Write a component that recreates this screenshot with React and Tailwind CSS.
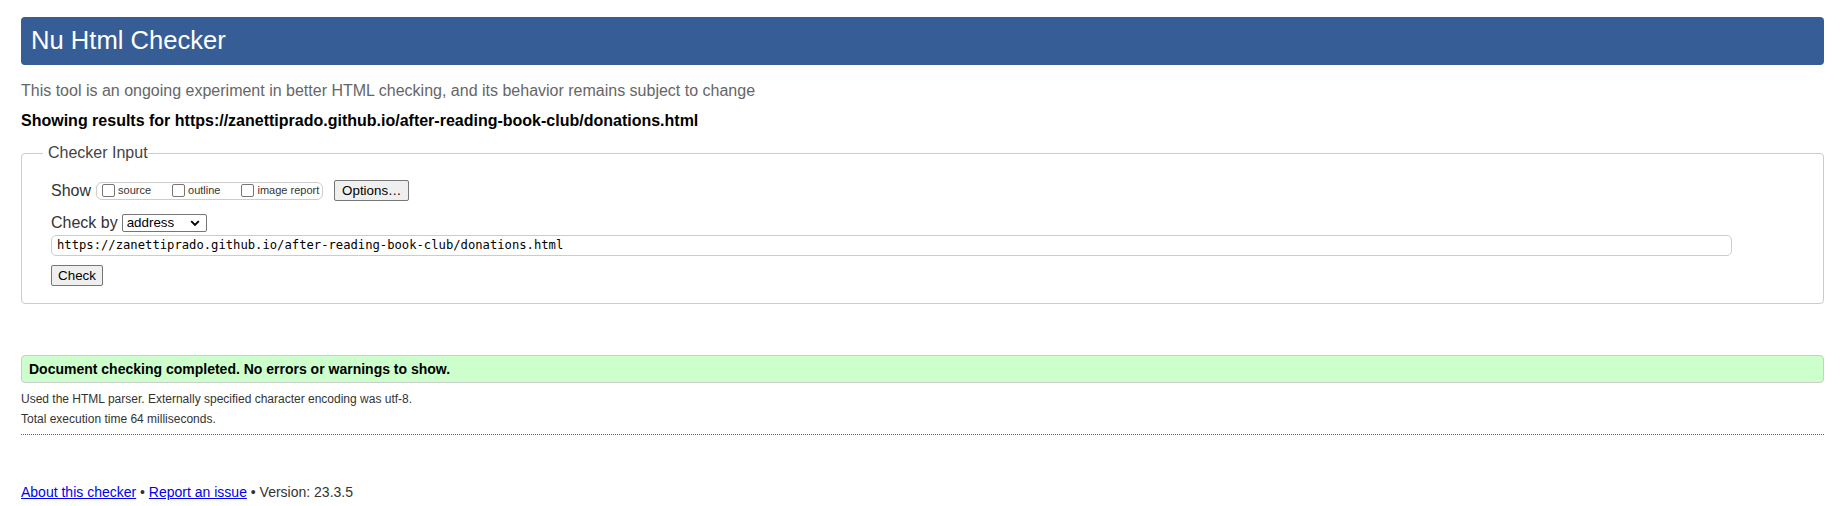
import React from 'react';

const checks = [
  { id: 'source', label: 'source', gap: 'mr-[17px]' },
  { id: 'outline', label: 'outline', gap: 'mr-[17px]' },
  { id: 'image', label: 'image report', gap: 'mr-[3px]' },
];

const btn =
  'flex items-center justify-center h-[21px] px-[6px] bg-[#efefef] border border-[#767676] rounded-[2px] text-[13.333px] text-black leading-none';

export default function App() {
  return (
    <div className="bg-white min-h-[506px] pt-[17px] font-['Liberation_Sans',Arial,sans-serif] text-[#222]">
      <div className="ml-[21px] w-[1803px]">
        {/* Title bar */}
        <div className="h-[48px] flex items-center pl-[10px] bg-[#365d95] rounded-[4px]">
          <h1 className="text-[25.6px] leading-none text-white">Nu Html Checker</h1>
        </div>

        <p className="mt-[17px] text-[16px] leading-[18px] text-[#666]">
          This tool is an ongoing experiment in better HTML checking, and its behavior remains subject to change
        </p>
        <p className="mt-[12px] text-[16px] leading-[18px] font-bold text-black">
          Showing results for https://zanettiprado.github.io/after-reading-book-club/donations.html
        </p>

        {/* Input form */}
        <fieldset className="mt-[14px] border border-[#cccccc] rounded-[4px] pl-[29px] pb-[17px]">
          <legend className="-ml-[8px] pl-[5px] text-[16px] leading-[18px] text-[#444]">Checker Input</legend>

          <div className="mt-[18px] h-[21px] flex items-center">
            <span className="text-[16px] leading-[18px] text-[#333]">Show</span>
            <div className="ml-[5px] h-[18px] flex items-center border border-[#cccccc] rounded-[6px] pl-[1px]">
              {checks.map(({ id, label, gap }) => (
                <label key={id} className={`flex items-center ${gap}`}>
                  <input
                    type="checkbox"
                    className="appearance-none ml-[4px] mr-[3px] w-[13px] h-[13px] bg-white border border-[#767676] rounded-[2px]"
                  />
                  <span className="text-[11px] leading-[13px] text-[#333]">{label}</span>
                </label>
              ))}
            </div>
            <button className={`${btn} ml-[11px] w-[75px]`}>Options…</button>
          </div>

          <div className="mt-[13px] h-[18px] flex items-center">
            <span className="text-[16px] leading-[18px] text-[#333]">Check by</span>
            <div className="ml-[4px] w-[85px] h-[18px] flex items-center justify-between pl-[4px] pr-[6px] border border-[#767676] rounded-[2px] bg-white">
              <span className="text-[13.333px] leading-none text-black">address</span>
              <svg width="10" height="7" viewBox="0 0 10 7" className="mt-[1px]">
                <path d="M1.2 1.2 L5 5 L8.8 1.2" fill="none" stroke="#000" strokeWidth="1.9" />
              </svg>
            </div>
          </div>

          <div className="mt-[3px] w-[1681px] h-[21px] flex items-center pl-[5px] border border-[#cccccc] rounded-[5px] bg-white">
            <span className="font-['DejaVu_Sans_Mono','Liberation_Mono',monospace] text-[12.2px] leading-none text-black">
              https://zanettiprado.github.io/after-reading-book-club/donations.html
            </span>
          </div>

          <button className={`${btn} mt-[9px] w-[52px]`}>Check</button>
        </fieldset>

        {/* Result */}
        <div className="mt-[51px] h-[28px] flex items-center pl-[7px] bg-[#ccffcc] border border-[#cccccc] rounded-[4px]">
          <span className="text-[14px] leading-none font-bold text-black">
            Document checking completed. No errors or warnings to show.
          </span>
        </div>

        <p className="mt-[9px] text-[12px] leading-[14px] text-[#333]">
          Used the HTML parser. Externally specified character encoding was utf-8.
        </p>
        <p className="mt-[6px] text-[12px] leading-[14px] text-[#333]">Total execution time 64 milliseconds.</p>
        <div className="mt-[8px] border-b border-dotted border-[#666]" />

        <p className="mt-[49px] text-[14px] leading-[16px] text-[#333]">
          <a href="#about" className="text-[#0000ee] underline">About this checker</a>
          {' • '}
          <a href="#issue" className="text-[#0000ee] underline">Report an issue</a>
          {' • Version: 23.3.5'}
        </p>
      </div>
    </div>
  );
}
